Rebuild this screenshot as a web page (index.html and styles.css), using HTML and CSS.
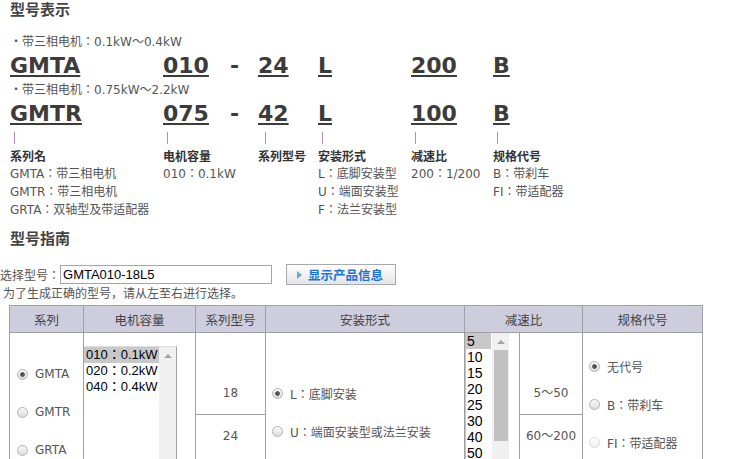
FILE: index.html
```html
<!DOCTYPE html>
<html lang="zh-CN">
<head>
  <meta charset="UTF-8">
  <title>型号表示</title>
  <link rel="stylesheet" href="styles.css">
</head>
<body>

<h2 class="title">型号表示</h2>

<div class="codes">
  <div class="series-desc first">・带三相电机：0.1kW～0.4kW</div>
  <div class="code-row">
    <span><u>GMTA</u></span><span><u>010</u></span><span>-</span><span><u>24</u></span><span><u>L</u></span><span><u>200</u></span><span><u>B</u></span>
  </div>
  <div class="series-desc">・带三相电机：0.75kW～2.2kW</div>
  <div class="code-row">
    <span><u>GMTR</u></span><span><u>075</u></span><span>-</span><span><u>42</u></span><span><u>L</u></span><span><u>100</u></span><span><u>B</u></span>
  </div>

  <div class="tick-row">
    <span class="tick"></span><span class="tick"></span><span></span><span class="tick tick-wide"></span><span class="tick"></span><span class="tick"></span><span class="tick"></span>
  </div>

  <div class="legend">
    <div>
      <div class="legend-title">系列名</div>
      <div>GMTA：带三相电机</div>
      <div>GMTR：带三相电机</div>
      <div>GRTA：双轴型及带适配器</div>
    </div>
    <div>
      <div class="legend-title">电机容量</div>
      <div>010：0.1kW</div>
    </div>
    <div></div>
    <div>
      <div class="legend-title">系列型号</div>
    </div>
    <div>
      <div class="legend-title">安装形式</div>
      <div>L：底脚安装型</div>
      <div>U：端面安装型</div>
      <div>F：法兰安装型</div>
    </div>
    <div>
      <div class="legend-title">减速比</div>
      <div>200：1/200</div>
    </div>
    <div>
      <div class="legend-title">规格代号</div>
      <div>B：带刹车</div>
      <div>FI：带适配器</div>
    </div>
  </div>
</div>

<h2 class="title title-guide">型号指南</h2>

<div class="select-row">
  <span>选择型号：</span>
  <input type="text" class="model-input" value="GMTA010-18L5">
  <button class="show-btn"><span class="tri"></span>显示产品信息</button>
</div>
<div class="note">为了生成正确的型号，请从左至右进行选择。</div>

<table class="guide">
  <colgroup>
    <col class="w-series"><col class="w-cap"><col class="w-num"><col class="w-mount"><col class="w-list"><col class="w-range"><col class="w-spec">
  </colgroup>
  <thead>
    <tr>
      <th>系列</th><th>电机容量</th><th>系列型号</th><th>安装形式</th><th colspan="2">减速比</th><th>规格代号</th>
    </tr>
  </thead>
  <tbody>
    <tr class="row-a">
      <td rowspan="2">
        <div class="radios radios-series">
          <label><input type="radio" name="series" checked>GMTA</label>
          <label><input type="radio" name="series">GMTR</label>
          <label><input type="radio" name="series">GRTA</label>
        </div>
      </td>
      <td rowspan="2">
        <div class="listbox listbox-cap">
          <ul>
            <li class="sel">010：0.1kW</li>
            <li>020：0.2kW</li>
            <li>040：0.4kW</li>
          </ul>
          <div class="scroll"><span class="arrow"></span></div>
        </div>
      </td>
      <td class="num num-a">18</td>
      <td rowspan="2">
        <div class="radios radios-mount">
          <label><input type="radio" name="mount" checked>L：底脚安装</label>
          <label><input type="radio" name="mount">U：端面安装型或法兰安装</label>
        </div>
      </td>
      <td rowspan="2">
        <div class="listbox listbox-ratio">
          <ul>
            <li class="sel">5</li>
            <li>10</li>
            <li>15</li>
            <li>20</li>
            <li>25</li>
            <li>30</li>
            <li>40</li>
            <li>50</li>
          </ul>
          <div class="scroll"><span class="arrow"></span><span class="thumb"></span></div>
        </div>
      </td>
      <td class="num num-a">5～50</td>
      <td rowspan="2">
        <div class="radios radios-spec">
          <label><input type="radio" name="spec" checked>无代号</label>
          <label><input type="radio" name="spec">B：带刹车</label>
          <label><input type="radio" name="spec" disabled>FI：带适配器</label>
        </div>
      </td>
    </tr>
    <tr class="row-b">
      <td class="num num-b">24</td>
      <td class="num num-b">60～200</td>
    </tr>
  </tbody>
</table>

</body>
</html>
```

FILE: styles.css
```css
body {
  margin: 0;
  font-family: "DejaVu Sans", "Noto Sans CJK JP", sans-serif;
  font-size: 12px;
  color: #555;
  background: #fff;
  /* keep the centred full-width colon of the JP glyph set */
  font-feature-settings: "locl" 0;
}

.title {
  margin: 0;
  padding-left: 10px;
  font-size: 15px;
  line-height: 20px;
  font-weight: bold;
  color: #444;
}

.title-guide {
  margin-top: 10px;
}

.codes {
  padding-left: 10px;
}

.series-desc {
  line-height: 18px;
}

.series-desc.first {
  margin-top: 13px;
}

.code-row,
.tick-row,
.legend {
  display: grid;
  grid-template-columns: 153px 67px 28px 60px 93px 82px auto;
}

.code-row {
  font-size: 22px;
  font-weight: bold;
  line-height: 30px;
  color: #3c3c3c;
}

.code-row u {
  text-decoration-thickness: 2px;
  text-underline-offset: 2px;
}

.tick-row {
  margin-top: 3px;
  height: 12px;
}

.tick {
  display: block;
  width: 1px;
  height: 12px;
  margin-left: 4px;
  background: #b68ab6;
}

.tick-wide {
  margin-left: 7px;
}

.legend {
  margin-top: 5px;
  line-height: 18px;
  white-space: nowrap;
}

.legend-title {
  line-height: 16px;
  font-weight: bold;
  color: #333;
}

.select-row {
  display: flex;
  align-items: center;
  margin-top: 15px;
  height: 21px;
}

.model-input {
  width: 212px;
  height: 19px;
  box-sizing: border-box;
  margin: 0;
  padding: 0 2px;
  border: 1px solid #a5a5a5;
  font-family: "Liberation Sans", Arial, sans-serif;
  font-size: 13px;
  color: #000;
}

.show-btn {
  display: flex;
  align-items: center;
  margin-left: 14px;
  width: 110px;
  height: 21px;
  padding: 0 0 0 10px;
  box-sizing: border-box;
  border: 1px solid #a8a8a8;
  background: linear-gradient(#ffffff, #e4e4e4);
  font-family: "Noto Sans CJK JP", sans-serif;
  font-size: 12.5px;
  font-weight: bold;
  color: #1b74d2;
  cursor: pointer;
}

.tri {
  width: 0;
  height: 0;
  margin-right: 6px;
  border-left: 5px solid #6aaad8;
  border-top: 4px solid transparent;
  border-bottom: 4px solid transparent;
}

.note {
  padding-left: 3px;
  line-height: 18px;
}

.guide {
  margin: 2px 0 0 9px;
  width: 694px;
  table-layout: fixed;
  border-collapse: collapse;
  font-size: 12px;
}

.w-series { width: 74px; }
.w-cap { width: 112px; }
.w-num { width: 70px; }
.w-mount { width: 199px; }
.w-list { width: 55px; }
.w-range { width: 63px; }
.w-spec { width: 120px; }

.guide th {
  height: 26px;
  padding: 0;
  background: #cdcddd;
  border: 1px solid #a0a0a0;
  font-size: 12.5px;
  font-weight: normal;
  color: #444;
}

.guide td {
  padding: 0;
  border: 1px solid #a0a0a0;
  vertical-align: top;
}

.row-a td {
  height: 81px;
}

.row-b td {
  height: 70px;
}

.num {
  text-align: center;
  line-height: 16px;
}

.guide td.num-a {
  padding-top: 52px;
  height: 29px;
}

.guide td.num-b {
  padding-top: 13px;
  height: 57px;
}

.radios {
  display: flex;
  flex-direction: column;
}

.radios label {
  display: flex;
  align-items: center;
  height: 38px;
  white-space: nowrap;
}

.radios-series { padding: 22px 0 0 7px; }
.radios-mount { padding: 41px 0 0 6px; }
.radios-spec { padding: 14px 0 0 6px; }

.radios input {
  appearance: none;
  -webkit-appearance: none;
  width: 11px;
  height: 11px;
  margin: 0 7px 0 0;
  border: 1px solid #b4b4b4;
  border-radius: 50%;
  background: linear-gradient(#fafafa, #dcdcdc);
}

.radios input:checked {
  background: radial-gradient(circle, #555 0 2px, transparent 2.6px), linear-gradient(#fafafa, #dcdcdc);
}

.radios input:disabled {
  border-color: #dcdcdc;
  background: linear-gradient(#fdfdfd, #efefef);
}

.listbox {
  display: flex;
  overflow: hidden;
  font-family: "Liberation Sans", Arial, "Noto Sans CJK JP", sans-serif;
  color: #000;
}

.listbox ul {
  margin: 0;
  padding: 0;
  list-style: none;
  flex: 1;
}

.listbox li {
  line-height: 16px;
  padding-left: 2px;
  white-space: nowrap;
}

.listbox li.sel {
  background: #c8c8c8;
}

.listbox .scroll {
  position: relative;
  width: 17px;
  background: #f0f0f0;
}

.arrow {
  position: absolute;
  left: 5px;
  top: 7px;
  width: 0;
  height: 0;
  border-bottom: 4px solid #a3a3a3;
  border-left: 4px solid transparent;
  border-right: 4px solid transparent;
}

.thumb {
  position: absolute;
  left: 2px;
  top: 17px;
  width: 14px;
  height: 91px;
  background: #c1c1c1;
}

.listbox-cap {
  margin-top: 13px;
  width: 93px;
  height: 130px;
  box-sizing: border-box;
  border-top: 1px solid #dddddd;
  border-right: 1px solid #a0a0a0;
  font-size: 13px;
}

.listbox-ratio {
  width: 44px;
  height: 140px;
  box-sizing: border-box;
  border-left: 1px solid #c4c4c4;
  font-size: 14px;
}

.listbox-ratio li {
  padding-left: 1px;
  margin-right: 1px;
}
```
